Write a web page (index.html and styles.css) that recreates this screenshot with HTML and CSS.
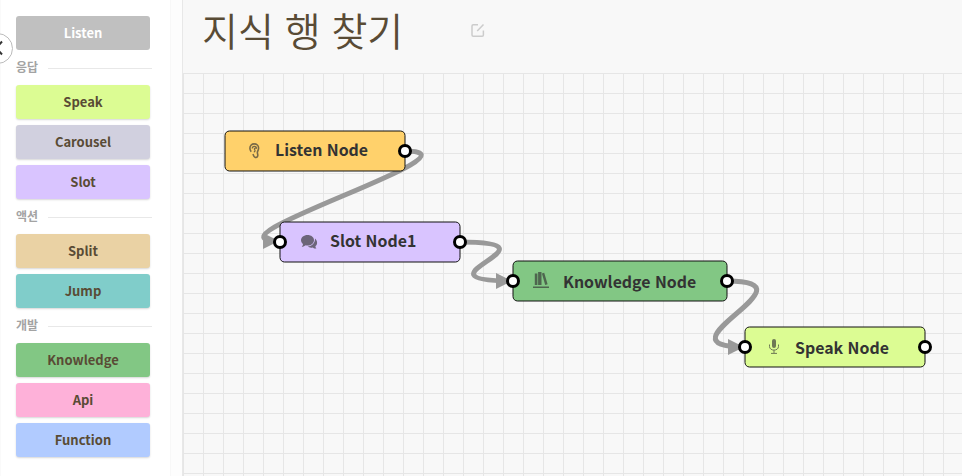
FILE: index.html
```html
<!DOCTYPE html>
<html lang="ko">
<head>
<meta charset="utf-8">
<title>지식 행 찾기</title>
<link rel="stylesheet" href="styles.css">
</head>
<body>
<div class="app">
  <aside class="palette">
    <button class="item listen">Listen</button>
    <h2 class="group">응답</h2>
    <button class="item speak">Speak</button>
    <button class="item carousel">Carousel</button>
    <button class="item slot">Slot</button>
    <h2 class="group">액션</h2>
    <button class="item split">Split</button>
    <button class="item jump">Jump</button>
    <h2 class="group">개발</h2>
    <button class="item knowledge">Knowledge</button>
    <button class="item api">Api</button>
    <button class="item function">Function</button>
    <div class="collapse"><svg width="10" height="16" viewBox="0 0 10 16"><path d="M8 1.500 2 8l6 6.500"/></svg></div>
  </aside>
  <main class="editor">
    <header class="head">
      <h1>지식 행 찾기</h1>
      <svg class="edit" width="14" height="15" viewBox="0 0 14 15"><path d="M7 1.700H2.200Q1 1.700 1 2.900V12Q1 13.200 2.200 13.200H11.200Q12.400 13.200 12.400 12V7.500M6.200 8 12.500 1.500"/></svg>
    </header>
    <section class="canvas">
      <svg class="edges" width="779" height="403" viewBox="183 73 779 403">
        <path d="M405 151C493 151 192 241 280 241"/>
        <path d="M460 242C570 242 403 281 513 281"/>
        <path d="M727 281C822 281 650 347 745 347"/>
        <g class="arrows"><path d="M263 233v16l16-8zM496 273v16l16-8zM728 339v16l16-8z"/></g>
      </svg>
      <div class="node n1"><svg class="icon" width="12" height="16" viewBox="0 0 12 16"><path class="line" d="M2.200 8.800C1.200 7.500.9 6.500.9 5.300.9 2.600 2.800.9 5.200.9S9.600 2.700 9.600 5C9.600 7.800 7.800 8.500 8.500 10.500 9.300 13 8.300 14.500 6.800 14.500 4.800 14.500 4.500 12.500 4 11"/><path class="line inner" d="M3.200 5.600C3.200 2.700 7.600 2.700 7.400 5.200 6.200 4.800 5.100 5.500 5.500 6.500 6.500 7.500 6 8.800 4.800 9"/></svg><span>Listen Node</span></div>
      <div class="node n2"><svg class="icon" width="17" height="14" viewBox="0 0 17 14"><path d="M6.500 0C2.900 0 0 2.300 0 5.200 0 6.700.8 8 2 9c0 1-.4 1.900-1.200 2.800 1.500 0 2.900-.6 3.900-1.500.6.1 1.200.2 1.800.2 3.600 0 6.500-2.300 6.500-5.300S10.100 0 6.500 0ZM14 3.500c.3 4.200-3 7.800-7.300 8 1.400 1.100 3.300 1.400 5 .9 1 .8 2.400 1.300 3.700 1.200-.6-.7-1-1.500-1-2.300 2.300-1.900 2.400-5.300-.4-7.800Z"/></svg><span>Slot Node1</span></div>
      <div class="node n3"><svg class="icon" width="16" height="16" viewBox="0 0 16 16"><path d="M0 14.500h16V16H0ZM1.800 1.500h2.600V13H1.800ZM5.100 0h3.400V13H5.100ZM8.900 1.500l2.300-.7 3.400 11.500-2.400.8Z"/></svg><span>Knowledge Node</span></div>
      <div class="node n4"><svg class="icon" width="10" height="15" viewBox="0 0 10 15"><rect x="3" width="4" height="9" rx="2"/><path class="thin" d="M.5 5.500v2C.5 12.300 9.500 12.300 9.500 7.500v-2M5 11v3M2 14.400h6"/></svg><span>Speak Node</span></div>
      <i class="port p1"></i><i class="port p2"></i><i class="port p3"></i><i class="port p4"></i><i class="port p5"></i><i class="port p6"></i><i class="port p7"></i>
    </section>
  </main>
</div>
</body>
</html>
```
FILE: styles.css
```css
* { box-sizing: border-box; }
body { margin: 0; overflow: hidden; font-family: "Noto Sans CJK KR", sans-serif; color: #594b35; }
.app { display: flex; width: 962px; height: 476px; background: #fdfdfd; }
.palette { position: relative; width: 171px; flex: none; padding: 16px 20px 0 15px; background: #fff; border-right: 1px solid #f8f8f8; border-left: 1px solid #fafafa; margin-right: 11px; }
.item { display: block; width: 134px; height: 34px; margin: 0 0 6px; padding: 0; border: 0; border-radius: 3px; box-shadow: 0 1px 2px rgba(0,0,0,.16); font: 700 13px/34px "Noto Sans CJK KR", sans-serif; color: #594b35; text-align: center; }
.listen { background: #c0c0c0; color: #fff; box-shadow: none; }
.speak { background: #dcfc93; }
.carousel { background: #d1d0df; }
.slot { background: #d9c4ff; }
.split { background: #ead2a4; }
.jump { background: #80cdca; }
.knowledge { background: #82c784; }
.api { background: #feb1d9; }
.function { background: #b1cbff; }
.group { display: flex; align-items: center; gap: 10px; width: 136px; height: 23px; margin: 0 0 6px; padding-bottom: 2px; font-size: 12px; line-height: 21px; font-weight: 700; color: #a3a3a3; }
.group::after { content: ""; flex: 1; height: 1px; margin-top: 3px; background: #e8e8e8; }
.collapse { position: absolute; left: -19px; top: 33px; width: 31px; height: 31px; border: 1px solid #bbb; border-radius: 50%; background: #fff; }
.collapse svg { position: absolute; left: 11px; top: 6px; fill: none; stroke: #333; stroke-width: 2; }
.editor { flex: 1; display: flex; flex-direction: column; border-left: 1px solid #e8e8e8; background: #f8f8f8; }
.head { display: flex; height: 73px; padding-left: 19px; }
h1 { width: 269px; margin: 0; font-size: 39px; line-height: 58px; font-weight: 350; white-space: nowrap; }
.edit { margin-top: 23px; fill: none; stroke: #ccc; stroke-width: 1.5; }
.canvas { position: relative; flex: 1; background-image: linear-gradient(#e6e6e6 1px, transparent 1px), linear-gradient(90deg, #e6e6e6 1px, transparent 1px); background-size: 20px 20px; }
.edges { position: absolute; inset: 0; fill: none; stroke: #999; stroke-width: 5; }
.arrows { fill: #999; stroke: none; }
.node { position: absolute; width: 181px; height: 41px; font-size: 15.9px; line-height: 40px; font-weight: 700; color: #333; white-space: nowrap; }
.node::before { content: ""; position: absolute; inset: 0; border: 1px solid #111; border-radius: 5px; background: var(--fill); transform: translate(.5px, .5px); }
.node span { position: absolute; left: 51px; top: 0; }
.icon { position: absolute; top: 13px; fill: currentColor; opacity: .65; }
.line, .thin { fill: none; stroke: currentColor; stroke-width: 1.6; }
.inner { stroke-width: 1.2; }
.thin { stroke-width: 1; }
.n1 { left: 41px; top: 57px; --fill: #ffd16b; }
.n1 .icon { left: 25px; }
.n2 { left: 96px; top: 148px; --fill: #d9c4ff; }
.n2 .icon { left: 22px; top: 14px; }
.n3 { left: 329px; top: 187px; width: 215px; --fill: #82c784; }
.n3 .icon { left: 21px; top: 12px; }
.n4 { left: 561px; top: 253px; --fill: #dcfc93; }
.n4 .icon { left: 25px; }
.n3 span, .n4 span { top: 2px; }
.port { position: absolute; width: 14px; height: 14px; border: 3px solid #000; border-radius: 50%; background: #fff; }
.p1 { left: 215px; top: 71px; }
.p2 { left: 90px; top: 162px; }
.p3 { left: 270px; top: 162px; }
.p4 { left: 323px; top: 201px; }
.p5 { left: 537px; top: 201px; }
.p6 { left: 555px; top: 267px; }
.p7 { left: 735px; top: 267px; }
```
